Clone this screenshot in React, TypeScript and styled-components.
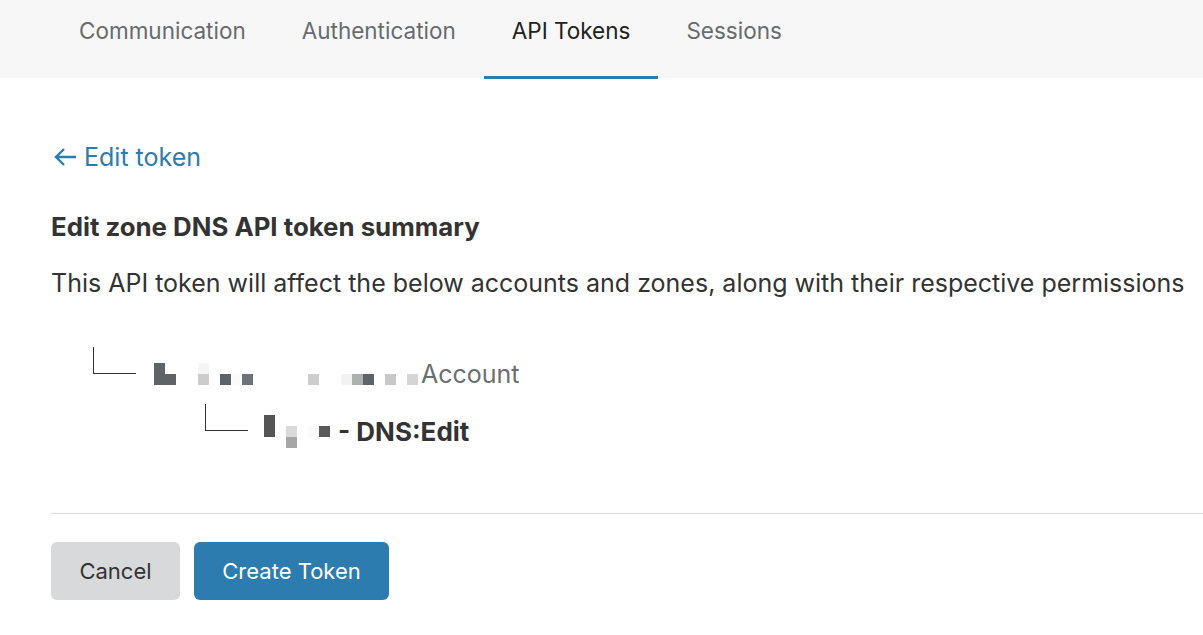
import React from 'react';
import styled, { createGlobalStyle } from 'styled-components';

const GlobalStyle = createGlobalStyle`
  body {
    margin: 0;
    background: #fff;
    font-family: Inter, "Noto Sans", "Liberation Sans", sans-serif;
    color: #333;
    overflow: hidden;
  }
`;

const Nav = styled.nav`
  display: flex;
  height: 78px;
  padding-left: 51px;
  background-color: #f7f7f7;
`;

const Tab = styled.div<{ $active?: boolean }>`
  display: flex;
  align-items: center;
  padding: 0 28px 16px;
  font-size: 22.5px;
  color: ${(p) => (p.$active ? '#222' : '#676b6e')};
  border-bottom: 3px solid ${(p) => (p.$active ? '#2c7cb0' : 'transparent')};
  margin-bottom: -1px;
  white-space: nowrap;
`;

const Content = styled.main`
  padding-left: 51px;
`;

const BackLink = styled.a`
  display: flex;
  align-items: center;
  gap: 7px;
  margin-top: 64px;
  padding-left: 2px;
  height: 30px;
  font-size: 25px;
  color: #2c7cb0;
  text-decoration: none;
`;

const Heading = styled.h2`
  margin: 40px 0 0;
  font-size: 25.8px;
  line-height: 30px;
  font-weight: 700;
  color: #333;
`;

const Paragraph = styled.p`
  margin: 26px 0 0;
  font-size: 25px;
  line-height: 30px;
  color: #333;
  white-space: nowrap;
`;

const Tree = styled.div`
  margin-top: 49px;
  display: flex;
  flex-direction: column;
  gap: 3px;
`;

const TreeRow = styled.div<{ $indent: number }>`
  display: flex;
  align-items: center;
  height: 54px;
  padding-left: ${(p) => p.$indent}px;
`;

const Connector = styled.span<{ $gap: number }>`
  width: 42px;
  height: 26px;
  margin-bottom: 27px;
  margin-right: ${(p) => p.$gap}px;
  border-left: 1px solid #333;
  border-bottom: 1px solid #333;
  flex-shrink: 0;
`;

const AccountName = styled.span`
  margin-left: 3px;
  font-size: 25px;
  color: #6a6e70;
`;

const Permission = styled.span`
  margin-left: 8px;
  font-size: 26px;
  font-weight: 700;
  color: #333;
`;

const Divider = styled.hr`
  margin: 55px 0 0;
  border: 0;
  border-top: 1px solid #dcdcdc;
`;

const Actions = styled.div`
  display: flex;
  gap: 14px;
  margin-top: 28px;
`;

const Button = styled.button<{ $primary?: boolean }>`
  height: 58px;
  padding: 0 28px;
  min-width: ${(p) => (p.$primary ? '195px' : '129px')};
  border: none;
  border-radius: 6px;
  font-family: inherit;
  font-size: 22px;
  background-color: ${(p) => (p.$primary ? '#2c7cb0' : '#d8d9db')};
  color: ${(p) => (p.$primary ? '#fff' : '#333')};
  cursor: pointer;
`;

type Cell = [number, number, string, number?];

const Redacted: React.FC<{ width: number; height: number; cells: Cell[] }> = ({
  width,
  height,
  cells,
}) => (
  <svg width={width} height={height} viewBox={`0 0 ${width} ${height}`} style={{ flexShrink: 0 }}>
    {cells.map(([x, y, fill, h], i) => (
      <rect key={i} x={x} y={y} width={11} height={h ?? 11} fill={fill} />
    ))}
  </svg>
);

const accountCells: Cell[] = [
  [0, 0, '#5f6366', 22],
  [11, 11, '#5f6366'],
  [44, 0, '#f5f5f5'],
  [44, 11, '#cccccc'],
  [66, 11, '#5f6366'],
  [77, 11, '#fafafa'],
  [88, 11, '#6e7274'],
  [154, 11, '#cdcdcd'],
  [187, 11, '#f2f2f2'],
  [198, 11, '#aeb1b2'],
  [209, 11, '#5f6366'],
  [231, 11, '#c8c8c8'],
  [253, 11, '#d5d5d5'],
];

const zoneCells: Cell[] = [
  [0, 0, '#555555', 22],
  [22, 11, '#d9d9d9'],
  [22, 22, '#a6a6a6'],
  [44, 11, '#fafafa'],
  [55, 11, '#595959'],
];

const ArrowLeft = () => (
  <svg width="24" height="20" viewBox="0 0 24 20" fill="none" stroke="#2c7cb0" strokeWidth="2.4">
    <path d="M23 10H3M11 2L3 10l8 8" />
  </svg>
);

export default function App() {
  return (
    <>
      <GlobalStyle />
      <Nav>
        <Tab>Communication</Tab>
        <Tab>Authentication</Tab>
        <Tab $active>API Tokens</Tab>
        <Tab>Sessions</Tab>
      </Nav>
      <Content>
        <BackLink href="#">
          <ArrowLeft />
          Edit token
        </BackLink>
        <Heading>Edit zone DNS API token summary</Heading>
        <Paragraph>
          This API token will affect the below accounts and zones, along with their respective permissions
        </Paragraph>
        <Tree>
          <TreeRow $indent={42}>
            <Connector $gap={18} />
            <Redacted width={264} height={22} cells={accountCells} />
            <AccountName>Account</AccountName>
          </TreeRow>
          <TreeRow $indent={154}>
            <Connector $gap={16} />
            <Redacted width={66} height={33} cells={zoneCells} />
            <Permission>- DNS:Edit</Permission>
          </TreeRow>
        </Tree>
        <Divider />
        <Actions>
          <Button>Cancel</Button>
          <Button $primary>Create Token</Button>
        </Actions>
      </Content>
    </>
  );
}
